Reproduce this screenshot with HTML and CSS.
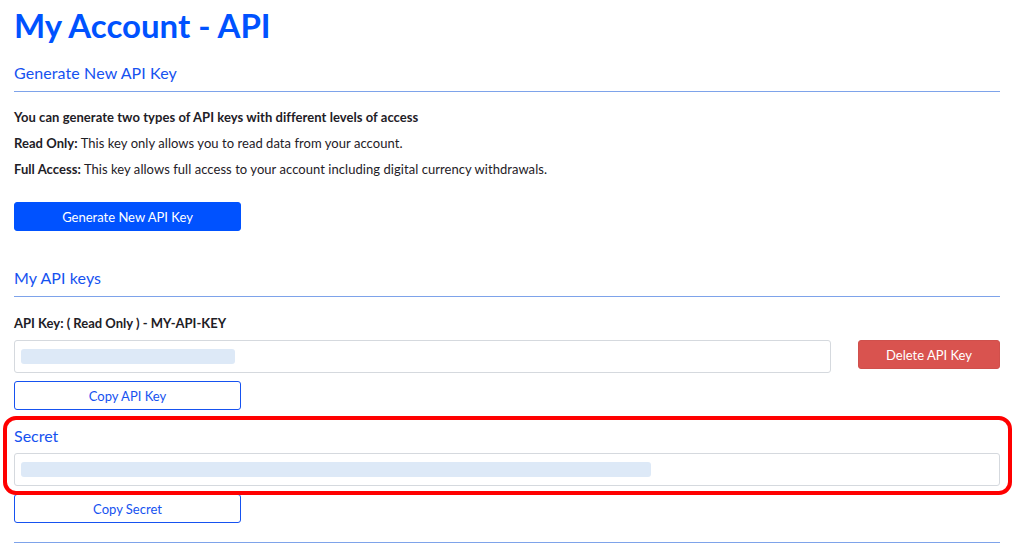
FILE: index.html
```html
<!DOCTYPE html>
<html>
<head>
    <meta charset="utf-8">
    <meta name="viewport" content="width=device-width, initial-scale=1">
    <title>My Account - API</title>
    <link rel="stylesheet" href="styles.css">
</head>
<body>
    <div class="page">
        <h1 class="page-title">My Account - API</h1>

        <section class="section">
            <h2 class="section-title">Generate New API Key</h2>
            <div class="section-body">
                <p class="lead">You can generate two types of API keys with different levels of access</p>
                <p><b>Read Only:</b> This key only allows you to read data from your account.</p>
                <p><b>Full Access:</b> This key allows full access to your account including digital currency withdrawals.</p>
                <button class="btn btn-primary gen-btn">Generate New API Key</button>
            </div>
        </section>

        <section class="section keys">
            <h2 class="section-title">My API keys</h2>
            <div class="section-body">
                <div class="key-label">API Key: ( Read Only ) - MY-API-KEY</div>
                <div class="key-row">
                    <div class="field"><span class="mask" style="width: 214px"></span></div>
                    <button class="btn btn-danger">Delete API Key</button>
                </div>
                <button class="btn btn-outline">Copy API Key</button>

                <div class="secret">
                    <div class="secret-label">Secret</div>
                    <div class="field"><span class="mask" style="width: 630px"></span></div>
                </div>
                <button class="btn btn-outline">Copy Secret</button>
            </div>
        </section>

        <div class="end-rule"></div>
    </div>
</body>
</html>
```

FILE: styles.css
```css
body, html {
    margin: 0;
    padding: 0;
    background: #fff;
}

body {
    font-family: 'Lato', 'Helvetica Neue', Arial, sans-serif;
    color: #1e2026;
}

.page {
    width: 986px;
    padding: 4px 0 0 14px;
}

.page-title {
    margin: 0;
    font-size: 33px;
    line-height: 42px;
    font-weight: 700;
    color: #0052ff;
}

.section-title {
    margin: 15px 0 0;
    padding-bottom: 6px;
    border-bottom: 1px solid #7ea3ea;
    font-size: 16px;
    line-height: 24px;
    font-weight: 400;
    color: #1652f0;
    letter-spacing: 0.1px;
}

.keys .section-title {
    margin-top: 35px;
}

.section-body {
    padding-top: 12px;
}

.section-body p {
    margin: 0;
    font-size: 13px;
    line-height: 26px;
    letter-spacing: 0.05px;
}

.section-body b,
.lead,
.key-label {
    font-weight: 700;
}

.btn {
    display: block;
    width: 227px;
    height: 29px;
    border-radius: 3px;
    font-family: inherit;
    font-size: 13px;
    cursor: pointer;
    padding: 0;
}

.btn-primary {
    background: #0052ff;
    border: 1px solid #0052ff;
    color: #fff;
}

.gen-btn {
    margin-top: 20px;
}

.btn-danger {
    width: 142px;
    background: #d9534f;
    border: 1px solid #d0504c;
    color: #fff;
}

.btn-outline {
    margin-top: 8px;
    background: #fff;
    border: 1px solid #1652f0;
    color: #1652f0;
}

.keys .section-body {
    padding-top: 16px;
}

.key-label {
    font-size: 13px;
    line-height: 20px;
}

.key-row {
    display: flex;
    align-items: flex-start;
    gap: 27px;
    margin-top: 7px;
}

.key-row .field {
    flex: 1;
}

.field {
    box-sizing: border-box;
    height: 33px;
    padding: 8px 6px;
    border: 1px solid #d5d9de;
    border-radius: 3px;
    background: #fff;
}

.mask {
    display: block;
    height: 15px;
    border-radius: 3px;
    background: #dde9f7;
}

.secret {
    position: relative;
    margin-top: 14px;
}

/* annotation drawn over the secret block */
.secret::after {
    content: '';
    position: absolute;
    top: -8px;
    bottom: -9px;
    left: -11px;
    right: -12px;
    border: 4px solid #f00;
    border-radius: 13px;
    pointer-events: none;
}

.secret-label {
    font-size: 16px;
    line-height: 24px;
    color: #1652f0;
    margin-bottom: 5px;
}

.end-rule {
    margin-top: 19px;
    border-top: 1px solid #7ea3ea;
}
```
